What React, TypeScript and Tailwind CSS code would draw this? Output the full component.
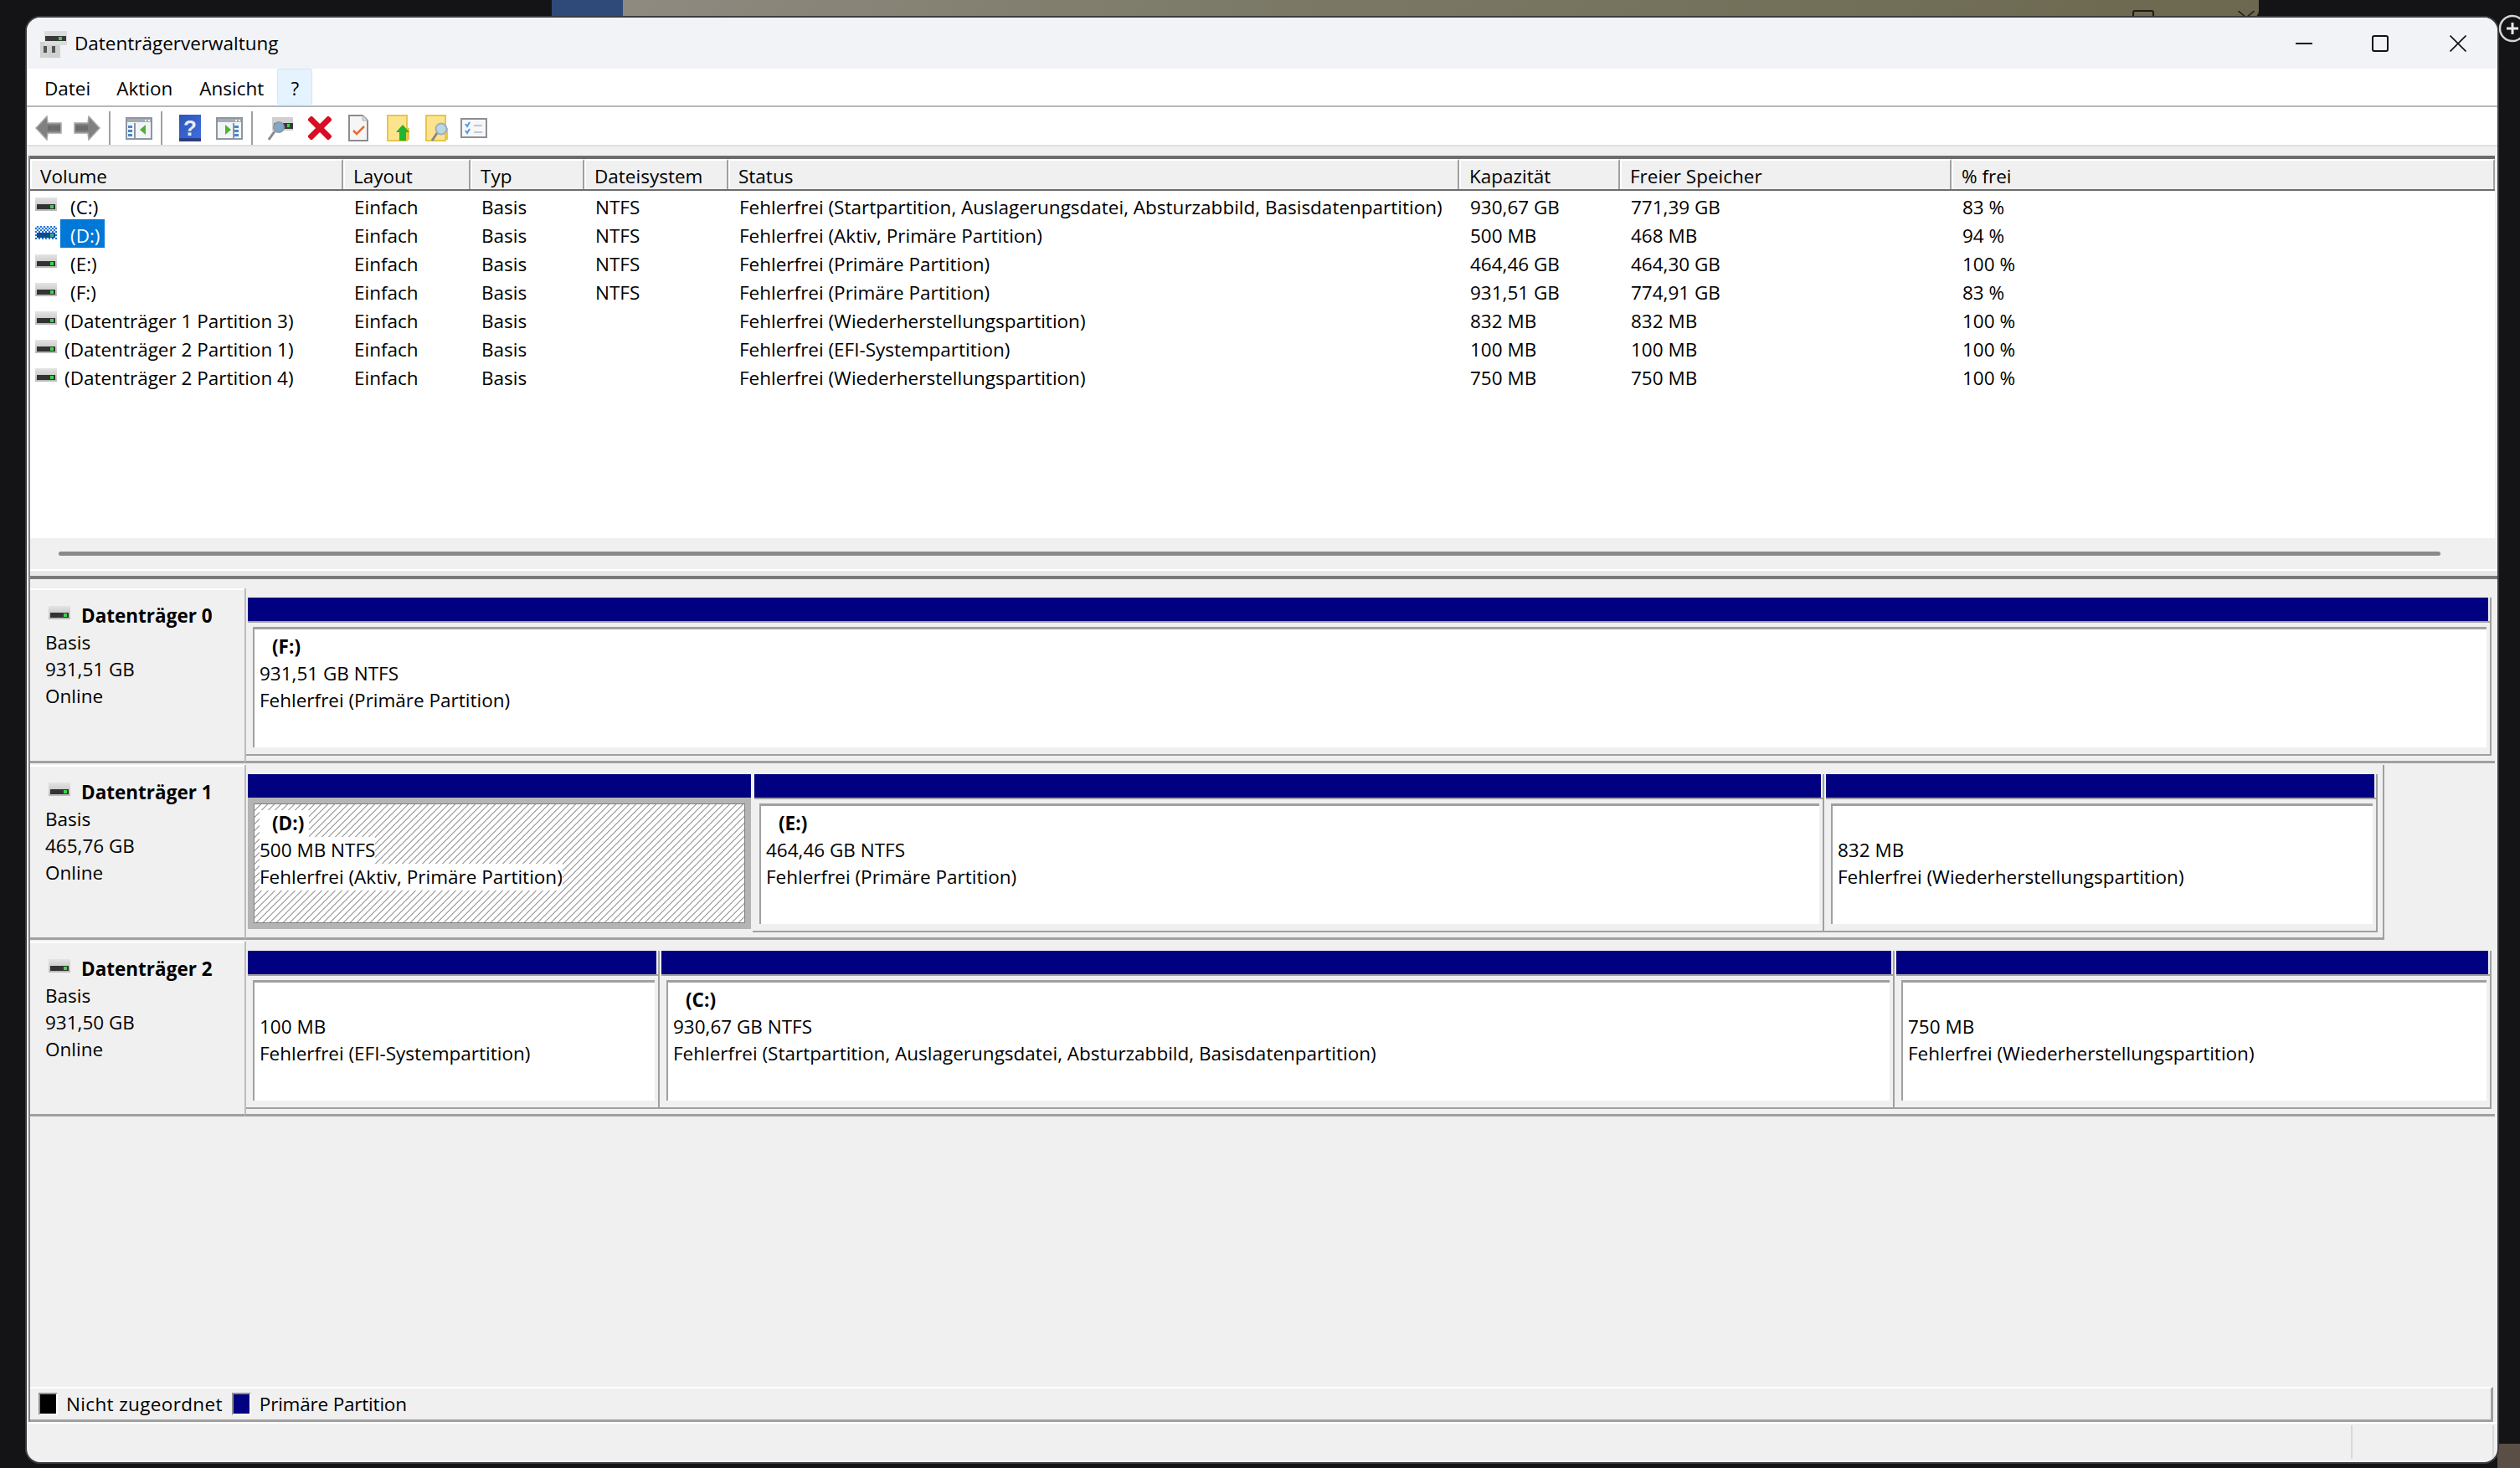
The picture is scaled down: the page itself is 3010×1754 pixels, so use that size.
const rows = [
  { name: "(C:)", pad: "pl-[12px]", layout: "Einfach", typ: "Basis", fs: "NTFS", status: "Fehlerfrei (Startpartition, Auslagerungsdatei, Absturzabbild, Basisdatenpartition)", cap: "930,67 GB", free: "771,39 GB", pct: "83 %" },
  { name: "(D:)", pad: "pl-[12px]", selected: true, layout: "Einfach", typ: "Basis", fs: "NTFS", status: "Fehlerfrei (Aktiv, Primäre Partition)", cap: "500 MB", free: "468 MB", pct: "94 %" },
  { name: "(E:)", pad: "pl-[12px]", layout: "Einfach", typ: "Basis", fs: "NTFS", status: "Fehlerfrei (Primäre Partition)", cap: "464,46 GB", free: "464,30 GB", pct: "100 %" },
  { name: "(F:)", pad: "pl-[12px]", layout: "Einfach", typ: "Basis", fs: "NTFS", status: "Fehlerfrei (Primäre Partition)", cap: "931,51 GB", free: "774,91 GB", pct: "83 %" },
  { name: "(Datenträger 1 Partition 3)", pad: "pl-[5px]", layout: "Einfach", typ: "Basis", fs: "", status: "Fehlerfrei (Wiederherstellungspartition)", cap: "832 MB", free: "832 MB", pct: "100 %" },
  { name: "(Datenträger 2 Partition 1)", pad: "pl-[5px]", layout: "Einfach", typ: "Basis", fs: "", status: "Fehlerfrei (EFI-Systempartition)", cap: "100 MB", free: "100 MB", pct: "100 %" },
  { name: "(Datenträger 2 Partition 4)", pad: "pl-[5px]", layout: "Einfach", typ: "Basis", fs: "", status: "Fehlerfrei (Wiederherstellungspartition)", cap: "750 MB", free: "750 MB", pct: "100 %" },
];

const gridCols = "grid grid-cols-[374px_152px_136px_172px_873px_192px_396px_1fr]";

const headers = ["Volume", "Layout", "Typ", "Dateisystem", "Status", "Kapazität", "Freier Speicher", "% frei"];

function DriveIcon({ className, hatched }: { className?: string; hatched?: boolean }) {
  return (
    <svg viewBox="0 0 26 16" className={className}>
      <defs>
        <pattern id="sel" width="4" height="4" patternUnits="userSpaceOnUse">
          <rect width="4" height="4" fill="#1f74d4" />
          <rect width="2" height="2" fill="#e8f2fc" />
          <rect x="2" y="2" width="2" height="2" fill="#e8f2fc" />
        </pattern>
        <linearGradient id="drv" x1="0" y1="0" x2="0" y2="1">
          <stop offset="0" stopColor="#e4e4e4" />
          <stop offset="1" stopColor="#b8b8b8" />
        </linearGradient>
      </defs>
      <rect x="0" y="0" width="26" height="16" fill={hatched ? "url(#sel)" : "url(#drv)"} />
      <rect x="2" y="8" width="22" height="6" fill={hatched ? "#134a8c" : "#333333"} />
      <rect x="18" y="9" width="4" height="4" fill={hatched ? "#3fa88a" : "#3fd34a"} />
    </svg>
  );
}

function ArrowIcon({ dir }: { dir: "left" | "right" }) {
  return (
    <svg viewBox="0 0 32 30" className={`h-[30px] w-[32px] ${dir === "right" ? "scale-x-[-1]" : ""}`}>
      <path d="M14 1 L1 15 L14 29 L15 21 L31 21 L31 9 L15 9 Z" fill="#808080" stroke="#a8a8a8" strokeWidth="1.5" />
      <rect x="15" y="12" width="15" height="6" fill="#6c6c6c" />
    </svg>
  );
}

function PaneIcon({ side }: { side: "left" | "right" }) {
  const listX = side === "left" ? 3 : 22;
  const arrow = side === "left" ? "M23 9 L16 15 L23 21 Z" : "M9 9 L16 15 L9 21 Z";
  return (
    <svg viewBox="0 0 32 27" className="h-[27px] w-[32px]">
      <rect x="1" y="1" width="30" height="25" fill="#f2f5f8" stroke="#8d96a0" strokeWidth="2" />
      <rect x="2" y="2" width="28" height="4" fill="#a3acb5" />
      <rect x="23" y="3" width="2" height="2" fill="#fff" />
      <rect x="27" y="3" width="2" height="2" fill="#fff" />
      <rect x={side === "left" ? 10 : 20} y="7" width="2" height="18" fill="#8d96a0" />
      <rect x={listX} y="10" width="5" height="3" fill="#4a86c5" />
      <rect x={listX} y="15" width="5" height="3" fill="#4a86c5" />
      <rect x={listX} y="20" width="5" height="3" fill="#4a86c5" />
      <path d={arrow} transform={side === "left" ? "translate(1 0)" : "translate(2 0)"} fill="#4cb32e" />
    </svg>
  );
}

function HelpIcon() {
  return (
    <svg viewBox="0 0 26 32" className="h-[32px] w-[26px]">
      <defs>
        <linearGradient id="hlp" x1="0" y1="0" x2="1" y2="1">
          <stop offset="0" stopColor="#2f55b8" />
          <stop offset="1" stopColor="#3f6fe0" />
        </linearGradient>
      </defs>
      <rect width="26" height="32" fill="url(#hlp)" />
      <rect y="28" width="26" height="4" fill="#2a3f80" />
      <text x="13" y="25" textAnchor="middle" fontSize="26" fontWeight="700" fill="#e8ecf8" fontFamily="'Liberation Sans', sans-serif">?</text>
    </svg>
  );
}

function DriveSearchIcon() {
  return (
    <svg viewBox="0 0 30 28" className="h-[28px] w-[30px]">
      <rect x="5" y="0" width="25" height="16" fill="#d0d0d0" />
      <rect x="7" y="7" width="23" height="7" fill="#3a3a3a" />
      <rect x="23" y="8" width="3" height="4" fill="#3fd34a" />
      <circle cx="13" cy="12" r="6" fill="#7fa8c8" stroke="#8a9aa8" strokeWidth="2" />
      <path d="M8 17 L1 27" stroke="#8a8a8a" strokeWidth="3" />
    </svg>
  );
}

function DeleteIcon() {
  return (
    <svg viewBox="0 0 28 28" className="h-[28px] w-[28px]">
      <path d="M4 4 L24 24 M24 4 L4 24" stroke="#d80f24" strokeWidth="7" strokeLinecap="square" />
    </svg>
  );
}

function CheckDocIcon() {
  return (
    <svg viewBox="0 0 24 32" className="h-[32px] w-[24px]">
      <path d="M1 1 H17 L23 7 V31 H1 Z" fill="#f6f6f6" stroke="#8c8c8c" strokeWidth="2" />
      <path d="M17 1 V7 H23" fill="#dcdcdc" stroke="#b0b0b0" strokeWidth="1" />
      <path d="M6 19 L10 23 L19 14" fill="none" stroke="#ee6a33" strokeWidth="2.5" />
    </svg>
  );
}

function FolderIcon({ children }: { children: React.ReactNode }) {
  return (
    <svg viewBox="0 0 28 32" className="h-[32px] w-[28px]">
      <rect x="1" y="1" width="23" height="30" fill="#fce48f" stroke="#e8c54a" strokeWidth="2" />
      <rect x="24" y="16" width="3" height="14" fill="#e8c54a" />
      {children}
    </svg>
  );
}

function ChecklistIcon() {
  return (
    <svg viewBox="0 0 32 24" className="h-[24px] w-[32px]">
      <rect x="1" y="1" width="30" height="22" fill="#f5f7f9" stroke="#8c8f94" strokeWidth="2" />
      <path d="M6 7 L8 10 L11 5 M6 15 L8 18 L11 13" fill="none" stroke="#4a9be8" strokeWidth="2" />
      <rect x="16" y="8" width="10" height="2" fill="#c4c8cc" />
      <rect x="16" y="16" width="10" height="2" fill="#c4c8cc" />
    </svg>
  );
}

function TitleIcon() {
  return (
    <svg viewBox="0 0 32 32" className="mt-[2px] h-[32px] w-[32px]">
      <rect x="0" y="13" width="24" height="19" fill="#d0d0d0" />
      <rect x="4" y="18" width="4" height="8" fill="#555" />
      <rect x="14" y="18" width="4" height="8" fill="#555" />
      <rect x="5" y="0" width="27" height="17" fill="#dcdcdc" />
      <rect x="6" y="6" width="25" height="6" fill="#3a3a3a" />
      <rect x="22" y="7" width="4" height="4" fill="#3fd34a" />
    </svg>
  );
}

function Sep() {
  return <div className="h-[40px] w-[2px] bg-[#a0a0a0]" />;
}

type Part = {
  width: string;
  letter?: string;
  size: string;
  status: string;
  active?: boolean;
};

function Partition({ p }: { p: Part }) {
  if (p.active) {
    return (
      <div className={`flex h-full shrink-0 flex-col pl-[2px] pr-[2px] ${p.width}`}>
        <div className="h-[28px] shrink-0 bg-[#000080]" />
        <div className="mb-[4px] flex min-h-0 flex-1 border-[7px] border-[#b4b4b4]">
          <div className="flex-1 border border-[#808080] bg-white bg-[repeating-linear-gradient(135deg,#ffffff_0px,#ffffff_4.66px,#b0b0b0_4.66px,#b0b0b0_5.66px)] pl-[6px] pt-[7px]">
            <PartText p={p} />
          </div>
        </div>
      </div>
    );
  }
  return (
    <div className={`flex h-full shrink-0 flex-col border-b-2 border-r-2 border-[#a0a0a0] pl-[2px] ${p.width}`}>
      <div className="mr-[2px] h-[28px] shrink-0 bg-[#000080]" />
      <div className="h-[2px] shrink-0 bg-[#a0a0a0]" />
      <div className="mb-[8px] ml-[6px] mr-[4px] mt-[5px] flex min-h-0 flex-1 flex-col border-l-2 border-t-[3px] border-[#a0a0a0] bg-white pl-[6px] pt-[5px]">
        <PartText p={p} />
      </div>
    </div>
  );
}

function PartText({ p }: { p: Part }) {
  const bg = p.active ? "bg-white" : "";
  return (
    <div className="flex flex-col items-start">
      <div className={`h-[32px] pl-[15px] pr-[6px] font-bold leading-[32px] ${bg}`}>{p.letter}</div>
      <div className={`h-[32px] leading-[32px] ${bg}`}>{p.size}</div>
      <div className={`h-[32px] leading-[32px] ${bg}`}>{p.status}</div>
    </div>
  );
}

const disks: { name: string; size: string; wrap: string; parts: Part[] }[] = [
  {
    name: "Datenträger 0",
    size: "931,51 GB",
    wrap: "w-[2688px]",
    parts: [{ width: "w-[2682px]", letter: "(F:)", size: "931,51 GB NTFS", status: "Fehlerfrei (Primäre Partition)" }],
  },
  {
    name: "Datenträger 1",
    size: "465,76 GB",
    wrap: "w-[2556px] border-r-2",
    parts: [
      { width: "w-[605px]", letter: "(D:)", size: "500 MB NTFS", status: "Fehlerfrei (Aktiv, Primäre Partition)", active: true },
      { width: "w-[1280px]", letter: "(E:)", size: "464,46 GB NTFS", status: "Fehlerfrei (Primäre Partition)" },
      { width: "w-[661px]", size: "832 MB", status: "Fehlerfrei (Wiederherstellungspartition)" },
    ],
  },
  {
    name: "Datenträger 2",
    size: "931,50 GB",
    wrap: "w-[2688px]",
    parts: [
      { width: "w-[494px]", size: "100 MB", status: "Fehlerfrei (EFI-Systempartition)" },
      { width: "w-[1475px]", letter: "(C:)", size: "930,67 GB NTFS", status: "Fehlerfrei (Startpartition, Auslagerungsdatei, Absturzabbild, Basisdatenpartition)" },
      { width: "w-[713px]", size: "750 MB", status: "Fehlerfrei (Wiederherstellungspartition)" },
    ],
  },
];

function DiskRow({ d }: { d: (typeof disks)[number] }) {
  return (
    <div className="flex h-[211px]">
      <div className="h-[209px] w-[256px] shrink-0 border-b-[3px] border-t-2 border-b-[#a0a0a0] border-t-white bg-[#f0f0f0] pl-[18px] pt-[15px]">
        <div className="flex h-[32px] items-center">
          <DriveIcon className="mb-[8px] ml-[4px] h-[16px] w-[26px]" />
          <span className="ml-[13px] font-bold">{d.name}</span>
        </div>
        <div className="leading-[32px]">Basis</div>
        <div className="leading-[32px]">{d.size}</div>
        <div className="leading-[32px]">Online</div>
      </div>
      <div className={`h-[209px] shrink-0 border-b-[3px] border-l-2 border-[#a0a0a0] border-l-[#bcbcbc] pt-[11px] ${d.wrap}`}>
        <div className="flex h-[189px]">
          {d.parts.map((p) => (
            <Partition key={p.size + p.status} p={p} />
          ))}
        </div>
      </div>
    </div>
  );
}

export default function App() {
  return (
    <div className="relative h-[1754px] w-[3010px] overflow-hidden bg-[#141416] pl-[32px] pt-[21px] font-['Open_Sans',sans-serif] text-[22.5px] text-black">
      {/* things behind the window */}
      <div className="absolute left-[659px] top-0 h-[21px] w-[2039px] overflow-hidden rounded-br-lg bg-[linear-gradient(90deg,#2f4a78_0px,#2f4a78_85px,#8f8a80_85px,#7c7a68_800px,#6c684f_100%)]">
        <div className="absolute left-[1888px] top-[12px] h-[14px] w-[26px] rounded-t-[3px] border-2 border-[#1c1c1c]" />
        <svg viewBox="0 0 26 10" className="absolute left-[2011px] top-[13px] h-[8px] w-[26px]">
          <path d="M1 0 L13 10 L25 0" fill="none" stroke="#1c1c1c" strokeWidth="2" />
        </svg>
      </div>
      <svg viewBox="0 0 34 34" className="absolute left-[2984px] top-[17px] h-[34px] w-[34px]">
        <circle cx="17" cy="17" r="15" fill="#141416" stroke="#d4d4d4" strokeWidth="2.5" />
        <path d="M17 10 V24 M10 17 H24" stroke="#e8e8e8" strokeWidth="3" />
      </svg>
      <div className="absolute left-[2983px] top-[1725px] h-[29px] w-[27px] bg-[#5a4f45]" />

      <div className="relative flex h-[1726px] w-[2951px] flex-col overflow-hidden rounded-[16px] bg-[#f0f0f0] shadow-[0_0_0_2px_#3c3c40]">
        {/* title bar */}
        <div className="flex h-[61px] shrink-0 items-center bg-[#f1f3f6] pl-[16px]">
          <TitleIcon />
          <span className="ml-[9px] mt-[1px]">Datenträgerverwaltung</span>
          <div className="ml-auto flex items-center pr-[37px]">
            <div className="h-[2px] w-[20px] bg-[#111]" />
            <div className="ml-[71px] h-[20px] w-[20px] rounded-[3px] border-2 border-[#111]" />
            <svg viewBox="0 0 20 20" className="ml-[73px] h-[20px] w-[20px]">
              <path d="M0.5 0.5 L19.5 19.5 M19.5 0.5 L0.5 19.5" stroke="#111" strokeWidth="1.6" />
            </svg>
          </div>
        </div>

        {/* menu */}
        <div className="flex h-[46px] shrink-0 items-start border-b-2 border-[#b4b7ba] bg-white pl-[5px]">
          <div className="flex h-[43px] items-center pl-[16px] pr-[15px] pt-[4px]">Datei</div>
          <div className="flex h-[43px] items-center px-[16px] pt-[4px]">Aktion</div>
          <div className="flex h-[43px] items-center pl-[16px] pr-[17px] pt-[4px]">Ansicht</div>
          <div className="ml-[-1px] flex h-[43px] w-[42px] items-center justify-center rounded-[2px] border border-[#cce8ff] bg-[#e5f3ff] pt-[4px]">?</div>
        </div>

        {/* toolbar */}
        <div className="flex h-[47px] shrink-0 items-center border-b-2 border-[#e0e0e0] bg-white pl-[10px] pt-[4px]">
          <ArrowIcon dir="left" />
          <div className="ml-[14px]"><ArrowIcon dir="right" /></div>
          <div className="ml-[10px]"><Sep /></div>
          <div className="ml-[18px] mt-[2px]"><PaneIcon side="left" /></div>
          <div className="ml-[10px]"><Sep /></div>
          <div className="ml-[20px]"><HelpIcon /></div>
          <div className="ml-[18px] mt-[2px]"><PaneIcon side="right" /></div>
          <div className="ml-[10px]"><Sep /></div>
          <div className="ml-[18px] mt-[2px]"><DriveSearchIcon /></div>
          <div className="ml-[18px]"><DeleteIcon /></div>
          <div className="ml-[20px]"><CheckDocIcon /></div>
          <div className="ml-[22px]">
            <FolderIcon>
              <path d="M19 12 L27 21 L23 21 L23 31 L15 31 L15 21 L11 21 Z" fill="#1fb52e" />
            </FolderIcon>
          </div>
          <div className="ml-[18px]">
            <FolderIcon>
              <circle cx="19" cy="17" r="6.5" fill="#bcd6e4" stroke="#9ab0bc" strokeWidth="2" />
              <path d="M14 22 L8 31" stroke="#888" strokeWidth="3" />
            </FolderIcon>
          </div>
          <div className="ml-[14px]"><ChecklistIcon /></div>
        </div>

        {/* everything under the toolbar hangs off one grey left edge */}
        <div className="ml-[2px] mt-[11px] flex min-h-0 flex-1 flex-col">
          <div className="flex min-h-0 flex-1 flex-col border-l-2 border-[#808080]">
            {/* list of volumes */}
            <div className="h-[457px] w-[2944px] shrink-0 border-t-4 border-[#6c6c6c] bg-white">
              <div className={`${gridCols} h-[38px] border-b-2 border-[#6c6c6c] bg-[#f0f0f0]`}>
                {headers.map((h) => (
                  <div key={h} className="flex h-[36px] items-end border-l-2 border-r-2 border-t-2 border-white border-r-[#a0a0a0] pl-[10px] leading-[30px]">
                    {h}
                  </div>
                ))}
              </div>
              {rows.map((r) => (
                <div key={r.name} className={`${gridCols} h-[34px] items-start leading-[40px]`}>
                  <div className="flex items-start pl-[6px]">
                    <DriveIcon hatched={r.selected} className="mt-[8px] h-[16px] w-[26px] shrink-0" />
                    <span className={`ml-[4px] h-[34px] ${r.pad} pr-[5px] ${r.selected ? "bg-[#0078d7] text-white" : ""}`}>{r.name}</span>
                  </div>
                  <div className="pl-[13px]">{r.layout}</div>
                  <div className="pl-[13px]">{r.typ}</div>
                  <div className="pl-[13px]">{r.fs}</div>
                  <div className="pl-[13px]">{r.status}</div>
                  <div className="pl-[13px]">{r.cap}</div>
                  <div className="pl-[13px]">{r.free}</div>
                  <div className="pl-[13px]">{r.pct}</div>
                </div>
              ))}
            </div>

            {/* horizontal scroll bar */}
            <div className="flex h-[37px] shrink-0 items-center pl-[34px]">
              <div className="h-[5px] w-[2845px] rounded-full bg-[#8a8a8a]" />
            </div>

            {/* splitter */}
            <div className="h-[12px] shrink-0 border-b-4 border-t-2 border-b-[#7a7a7a] border-t-white bg-[#e8e8e8]" />

            {/* disks */}
            <div className="mt-[11px] flex min-h-0 flex-1 flex-col">
              {disks.map((d) => (
                <DiskRow key={d.name} d={d} />
              ))}
            </div>

            {/* legend */}
            <div className="flex h-[42px] w-[2942px] shrink-0 items-center border-b-[3px] border-r-[3px] border-t-2 border-b-[#a0a0a0] border-r-[#a0a0a0] border-t-white pl-[10px]">
              <div className="h-[27px] w-[23px] border-2 border-b-white border-l-[#909090] border-r-white border-t-[#909090] bg-black" />
              <span className="ml-[10px] tracking-[0.35px]">Nicht zugeordnet</span>
              <div className="ml-[11px] h-[27px] w-[23px] border-2 border-b-white border-l-[#909090] border-r-white border-t-[#909090] bg-[#000080]" />
              <span className="ml-[10px] tracking-[-0.2px]">Primäre Partition</span>
            </div>
          </div>
        </div>

        {/* status bar */}
        <div className="flex h-[48px] shrink-0 items-center justify-end border-t-2 border-white pb-[2px] pr-[4px]">
          <div className="h-[40px] w-[171px] border-l-2 border-r-2 border-[#d8d8d8]" />
        </div>
      </div>
    </div>
  );
}
